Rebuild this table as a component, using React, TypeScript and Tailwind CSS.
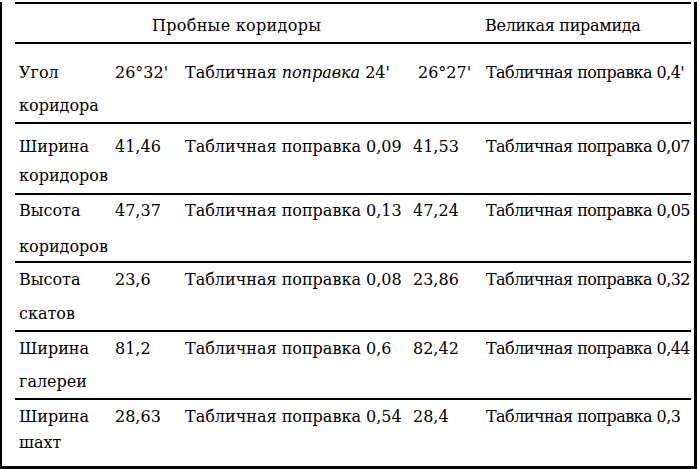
import React from "react";

type Row = {
  a: string;
  b: string;
  v1: string;
  t1: React.ReactNode;
  v2: string;
  t2: string;
  h: string;
  pt: string;
  mt: string;
  v2pl?: string;
};

const rows: Row[] = [
  {
    a: "Угол",
    b: "коридора",
    v1: "26°32'",
    t1: (
      <>
        Табличная <span className="italic">поправка</span> 24'
      </>
    ),
    v2: "26°27'",
    t2: "Табличная поправка 0,4'",
    h: "h-[80px]",
    pt: "pt-[15px]",
    mt: "mt-[5px]",
    v2pl: "pl-[5px]",
  },
  {
    a: "Ширина",
    b: "коридоров",
    v1: "41,46",
    t1: "Табличная поправка 0,09",
    v2: "41,53",
    t2: "Табличная поправка 0,07",
    h: "h-[71px]",
    pt: "pt-[9px]",
    mt: "mt-[1px]",
  },
  {
    a: "Высота",
    b: "коридоров",
    v1: "47,37",
    t1: "Табличная поправка 0,13",
    v2: "47,24",
    t2: "Табличная поправка 0,05",
    h: "h-[68px]",
    pt: "pt-[2px]",
    mt: "mt-[8px]",
  },
  {
    a: "Высота",
    b: "скатов",
    v1: "23,6",
    t1: "Табличная поправка 0,08",
    v2: "23,86",
    t2: "Табличная поправка 0,32",
    h: "h-[69px]",
    pt: "pt-[3px]",
    mt: "mt-[6px]",
  },
  {
    a: "Ширина",
    b: "галереи",
    v1: "81,2",
    t1: "Табличная поправка 0,6",
    v2: "82,42",
    t2: "Табличная поправка 0,44",
    h: "h-[68px]",
    pt: "pt-[3px]",
    mt: "mt-[5px]",
  },
  {
    a: "Ширина",
    b: "шахт",
    v1: "28,63",
    t1: "Табличная поправка 0,54",
    v2: "28,4",
    t2: "Табличная поправка 0,3",
    h: "h-[64px]",
    pt: "pt-[3px]",
    mt: "-mt-[2px]",
  },
];

export default function App() {
  return (
    <div className="w-[700px] h-[469px] bg-white text-black overflow-hidden font-['DejaVu_Serif',serif]">
      <div className="w-[697px] h-[467px] border-l-2 border-r-[3px] border-b-[3px] border-black box-border">
        <div className="ml-[13px] w-[676px] text-[16px] leading-[28px]">
          <div className="mt-[2px] h-[2px] bg-black" />
          <div className="h-[40px] border-b-2 border-black pt-[8px] flex">
            <span className="pl-[137px] w-[470px] tracking-[0.3px]">Пробные коридоры</span>
            <span className="tracking-[-0.3px]">Великая пирамида</span>
          </div>
          {rows.map((r, i) => (
            <div
              key={i}
              className={`${r.h} ${r.pt} ${i < rows.length - 1 ? "border-b-2 border-black" : ""}`}
            >
              <div className="grid grid-cols-[100px_70px_228px_73px_1fr] whitespace-nowrap">
                <span className="pl-[4px]">{r.a}</span>
                <span>{r.v1}</span>
                <span>{r.t1}</span>
                <span className={r.v2pl ?? ""}>{r.v2}</span>
                <span className="tracking-[-0.55px]">{r.t2}</span>
              </div>
              <div className={`${r.mt} pl-[4px]`}>{r.b}</div>
            </div>
          ))}
        </div>
      </div>
    </div>
  );
}
